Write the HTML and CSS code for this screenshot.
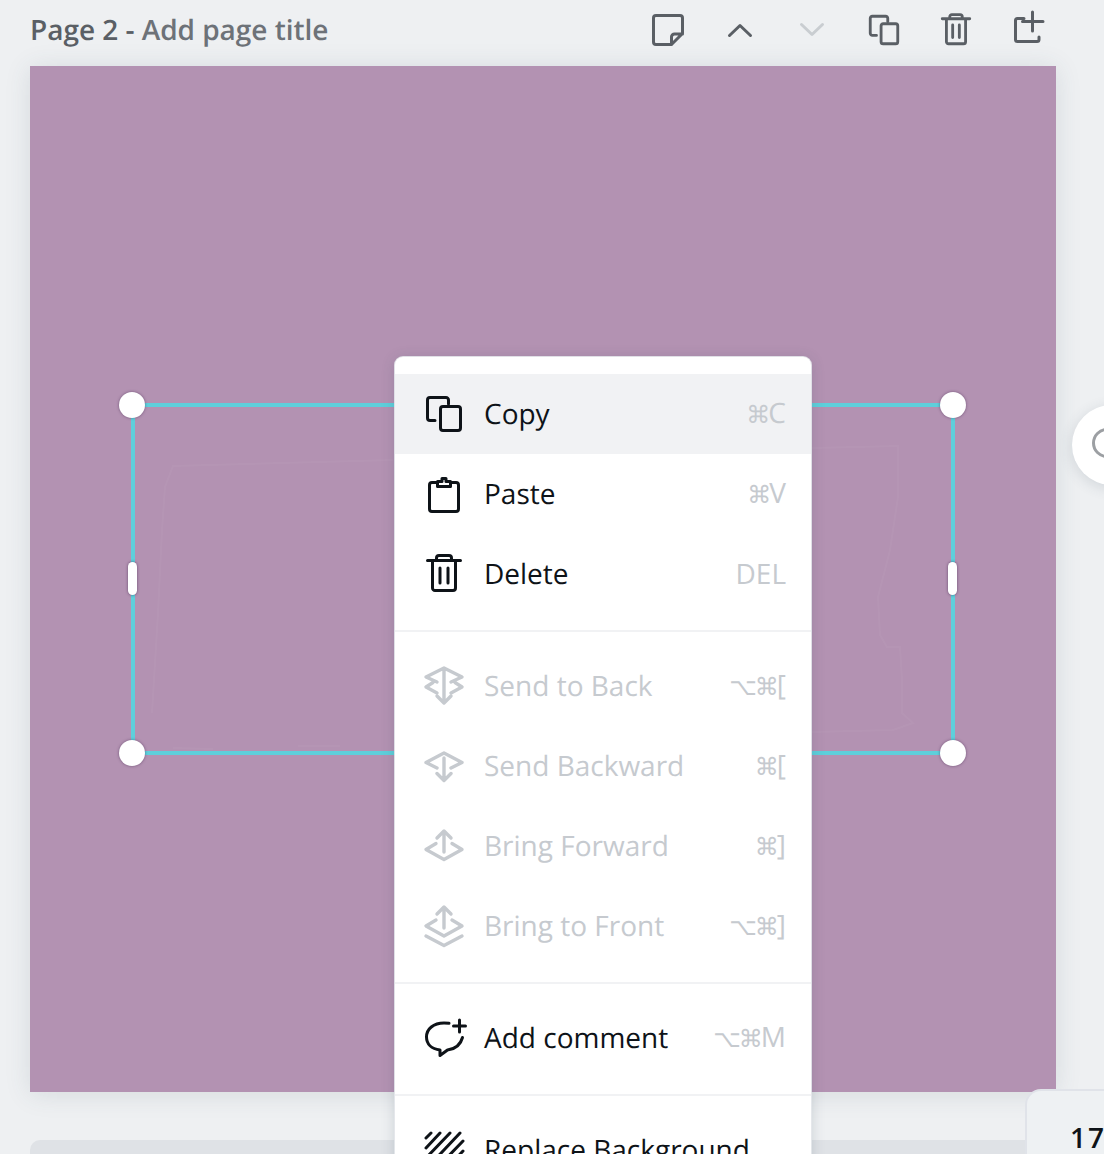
FILE: index.html
```html
<!DOCTYPE html>
<html lang="en">
<head>
<meta charset="utf-8">
<title>Page 2</title>
<link rel="stylesheet" href="styles.css">
</head>
<body>
<svg class="defs" aria-hidden="true">
  <symbol id="i-copy" viewBox="0 0 48 48"><path d="M15 30.500H10a2.500 2.500 0 0 1-2.500-2.500V10A2.500 2.500 0 0 1 10 7.500h16a2.500 2.500 0 0 1 2.500 2.500v4"/><rect x="20.500" y="16.500" width="20" height="24" rx="2.500"/></symbol>
  <symbol id="i-trash" viewBox="0 0 48 48"><path d="M7.500 10.500h33M12.500 10.500V38a2.500 2.500 0 0 0 2.500 2.500h18a2.500 2.500 0 0 0 2.500-2.500V10.500M16.500 10V8A2.500 2.500 0 0 1 19 5.500h10A2.500 2.500 0 0 1 31.500 8v2M20 18v15M28 18v15"/></symbol>
</svg>

<header class="page-header">
  <h1 class="page-title"><strong>Page 2</strong> - <span>Add page title</span></h1>
  <nav class="page-tools">
    <button class="tool"><svg class="ico" viewBox="0 0 48 48"><path d="M27.500 38.500H12A2.500 2.500 0 0 1 9.500 36V12A2.500 2.500 0 0 1 12 9.500h24a2.500 2.500 0 0 1 2.500 2.500v15.500zM27.500 38.500V31a3 3 0 0 1 3-3h8"/></svg></button>
    <button class="tool"><svg class="ico" viewBox="0 0 48 48"><path d="M13.500 29.500 24 19.500l10.500 10"/></svg></button>
    <button class="tool is-off"><svg class="ico" viewBox="0 0 48 48"><path d="M13.500 18.500 24 28.500l10.500-10"/></svg></button>
    <button class="tool"><svg class="ico ico-s"><use href="#i-copy"/></svg></button>
    <button class="tool"><svg class="ico ico-s"><use href="#i-trash"/></svg></button>
    <button class="tool"><svg class="ico" viewBox="0 0 48 48"><path d="M20 12.500h-6.500a2 2 0 0 0-2 2V33.500a2 2 0 0 0 2 2H33a2 2 0 0 0 2-2V31M28.500 6v19M18.500 15.500H39"/></svg></button>
  </nav>
</header>

<main class="canvas">
  <svg class="ghost" viewBox="0 0 1026 1026">
    <path d="M363 394 143 400 135 421 132 464 128 547 122 647M143 682l40 1M268 680h42M782 382l86-2v51l-8 53-12 47 2 38 7 12h13l2 33v33l11 10-20 7-81 2"/>
  </svg>
  <div class="selection">
    <i class="knob k-tl"></i><i class="knob k-tr"></i><i class="knob k-bl"></i><i class="knob k-br"></i>
    <i class="grip g-l"></i><i class="grip g-r"></i>
  </div>

  <div class="menu">
    <section class="group group-first">
      <div class="item is-hover">
        <svg class="ico"><use href="#i-copy"/></svg><span class="label">Copy</span><span class="keys"><b>⌘</b>C</span>
      </div>
      <div class="item">
        <svg class="ico" viewBox="0 0 48 48"><path d="M17 12.500h-5a2.500 2.500 0 0 0-2.500 2.500v24a2.500 2.500 0 0 0 2.500 2.500h24a2.500 2.500 0 0 0 2.500-2.500V15a2.500 2.500 0 0 0-2.500-2.500h-5M17.500 16.500h13v-5h-4.500v-3h-4v3h-4.500z"/></svg><span class="label">Paste</span><span class="keys"><b>⌘</b>V</span>
      </div>
      <div class="item">
        <svg class="ico"><use href="#i-trash"/></svg><span class="label">Delete</span><span class="keys">DEL</span>
      </div>
    </section>
    <section class="group">
      <div class="item is-off">
        <svg class="ico" viewBox="0 0 48 48"><path d="M17 20 6 15l18-9 18 9-11 5M13 20.500 6 25l11 6M35 20.500l7 4.500-11 6M24 9v31M17 34l7 7 7-7"/></svg><span class="label">Send to Back</span><span class="keys"><b>⌥⌘</b>[</span>
      </div>
      <div class="item is-off">
        <svg class="ico" viewBox="0 0 48 48"><path d="M17 26 6 20.500 24 11l18 9.500L31 26M24 16v22M17 31.500l7 7 7-7"/></svg><span class="label">Send Backward</span><span class="keys"><b>⌘</b>[</span>
      </div>
      <div class="item is-off">
        <svg class="ico" viewBox="0 0 48 48"><path d="M16 21.500 6 27.500l18 10 18-10-10-6M24 10v20M17 16l7-7 7 7"/></svg><span class="label">Bring Forward</span><span class="keys"><b>⌘</b>]</span>
      </div>
      <div class="item is-off">
        <svg class="ico" viewBox="0 0 48 48"><path d="M16 18 6 24l18 10 18-10-10-6M24 6v20M17 12l7-7 7 7M6 34l18 9.500L42 34"/></svg><span class="label">Bring to Front</span><span class="keys"><b>⌥⌘</b>]</span>
      </div>
    </section>
    <section class="group">
      <div class="item">
        <svg class="ico" viewBox="0 0 48 48"><path d="M29 9.200C27.500 9 26 9 24 9 13.500 9 6.500 15 6.500 23c0 7 5 12 13.500 13v5.500l7.500-5.500c8-1 13-5 15-12.500M39.500 6v12M33.500 12h12"/></svg><span class="label">Add comment</span><span class="keys"><b>⌥⌘</b>M</span>
      </div>
    </section>
    <section class="group">
      <div class="item">
        <svg class="ico" viewBox="0 0 48 48"><path d="M6 12l5-5M6 22 20 7M6 32 30 7M7 42 40 7M17 42l26-27M27 42l16-17"/></svg><span class="label">Replace Background</span>
      </div>
    </section>
  </div>
</main>

<div class="next-page"></div>

<div class="fab"><i class="fab-ring"></i></div>
<div class="zoom-tile">17%</div>
</body>
</html>
```
FILE: styles.css
```css
html, body {
  margin: 0;
  height: 1154px;
  overflow: hidden;
}
body {
  position: relative;
  background: #eef0f2;
  font-family: "Open Sans", "Noto Sans", "DejaVu Sans", sans-serif;
  color: #0e1318;
  text-rendering: geometricPrecision;
}
.defs { display: none; }

.page-header {
  height: 66px;
  display: flex;
  align-items: center;
  justify-content: space-between;
  padding: 0 40px 6px 30px;
  box-sizing: border-box;
}
.page-title {
  margin: 0;
  font-size: 28px;
  font-weight: 600;
  line-height: 40px;
  letter-spacing: -.03px;
  color: #5a5f65;
}
.page-title strong { font-weight: 600; }
.page-title span { color: #6d7278; }
.page-tools { display: flex; }
.tool {
  width: 72px;
  height: 48px;
  padding: 0;
  border: 0;
  background: none;
  display: flex;
  align-items: center;
  justify-content: center;
  color: #5a5f65;
}
.tool.is-off { color: #c9cdd1; }

.ico {
  flex: none;
  width: 48px;
  height: 48px;
  fill: none;
  stroke: currentColor;
  stroke-width: 3;
  stroke-linecap: round;
  stroke-linejoin: round;
}
.ico-s {
  width: 40px;
  height: 40px;
  stroke-width: 3.4;
}

.canvas {
  position: relative;
  width: 1026px;
  height: 1026px;
  margin-left: 30px;
  background: #b392b2;
  box-shadow: 0 2px 24px rgba(57, 76, 96, .13);
}
.ghost {
  position: absolute;
  inset: 0;
  width: 100%;
  height: 100%;
  fill: none;
  stroke: #fff;
  stroke-opacity: .035;
  stroke-width: 2;
}
.selection {
  position: absolute;
  left: 101px;
  top: 337px;
  width: 824px;
  height: 352px;
  box-sizing: border-box;
  border: 4px solid #5ecfdb;
}
.knob {
  position: absolute;
  width: 26px;
  height: 26px;
  border-radius: 50%;
  background: #fff;
  box-shadow: 0 0 3px rgba(57, 30, 70, .55);
}
.k-tl { left: -16px; top: -15px; }
.k-tr { right: -15px; top: -15px; }
.k-bl { left: -16px; bottom: -15px; }
.k-br { right: -15px; bottom: -15px; }
.grip {
  position: absolute;
  top: 50%;
  width: 9px;
  height: 33px;
  margin-top: -17px;
  border-radius: 5px;
  background: #fff;
  box-shadow: 0 0 3px rgba(57, 30, 70, .65);
}
.g-l { left: -7px; }
.g-r { right: -6px; }

.menu {
  position: absolute;
  left: 365px;
  top: 291px;
  width: 416px;
  background: #fff;
  border-radius: 8px;
  box-shadow: 0 0 0 1px rgba(230, 232, 236, .9), 0 2px 14px rgba(57, 76, 96, .22);
}
.group {
  padding: 14px 0 16px;
  border-top: 2px solid #f1f2f4;
}
.group-first {
  padding-top: 17px;
  border-top: 0;
}
.item {
  height: 80px;
  display: flex;
  align-items: center;
  padding: 0 25px;
  gap: 16px;
  font-size: 28px;
  line-height: 40px;
  white-space: nowrap;
}
.item.is-hover { background: #f1f2f4; }
.item.is-off { color: #c6cacf; }
.item.is-off .ico { stroke-width: 3.4; }
.keys {
  margin-left: auto;
  color: #c6cacf;
  font-size: 28px;
}
.keys b {
  font-weight: 400;
  font-size: 24px;
  font-family: "DejaVu Sans", sans-serif;
  letter-spacing: -2px;
}

.next-page {
  width: 1026px;
  height: 60px;
  margin: 48px 0 0 30px;
  background: #dfe2e6;
  border-radius: 10px 10px 0 0;
}
.fab {
  position: absolute;
  left: 1072px;
  top: 405px;
  width: 80px;
  height: 80px;
  border-radius: 50%;
  background: #fff;
  box-shadow: 0 3px 14px rgba(57, 76, 96, .16);
}
.fab-ring {
  position: absolute;
  left: 20px;
  top: 23px;
  width: 30px;
  height: 30px;
  box-sizing: border-box;
  border: 3px solid #9c9fa3;
  border-radius: 50%;
}
.zoom-tile {
  position: absolute;
  left: 1025px;
  top: 1089px;
  width: 120px;
  height: 90px;
  box-sizing: border-box;
  padding: 27px 0 0 43px;
  background: #eef1f3;
  border: solid #e0e3e9;
  border-width: 2px 0 0 2px;
  border-top-left-radius: 16px;
  font-size: 28px;
  font-weight: 600;
  line-height: 40px;
  letter-spacing: 2px;
  color: #0e1318;
}
```
